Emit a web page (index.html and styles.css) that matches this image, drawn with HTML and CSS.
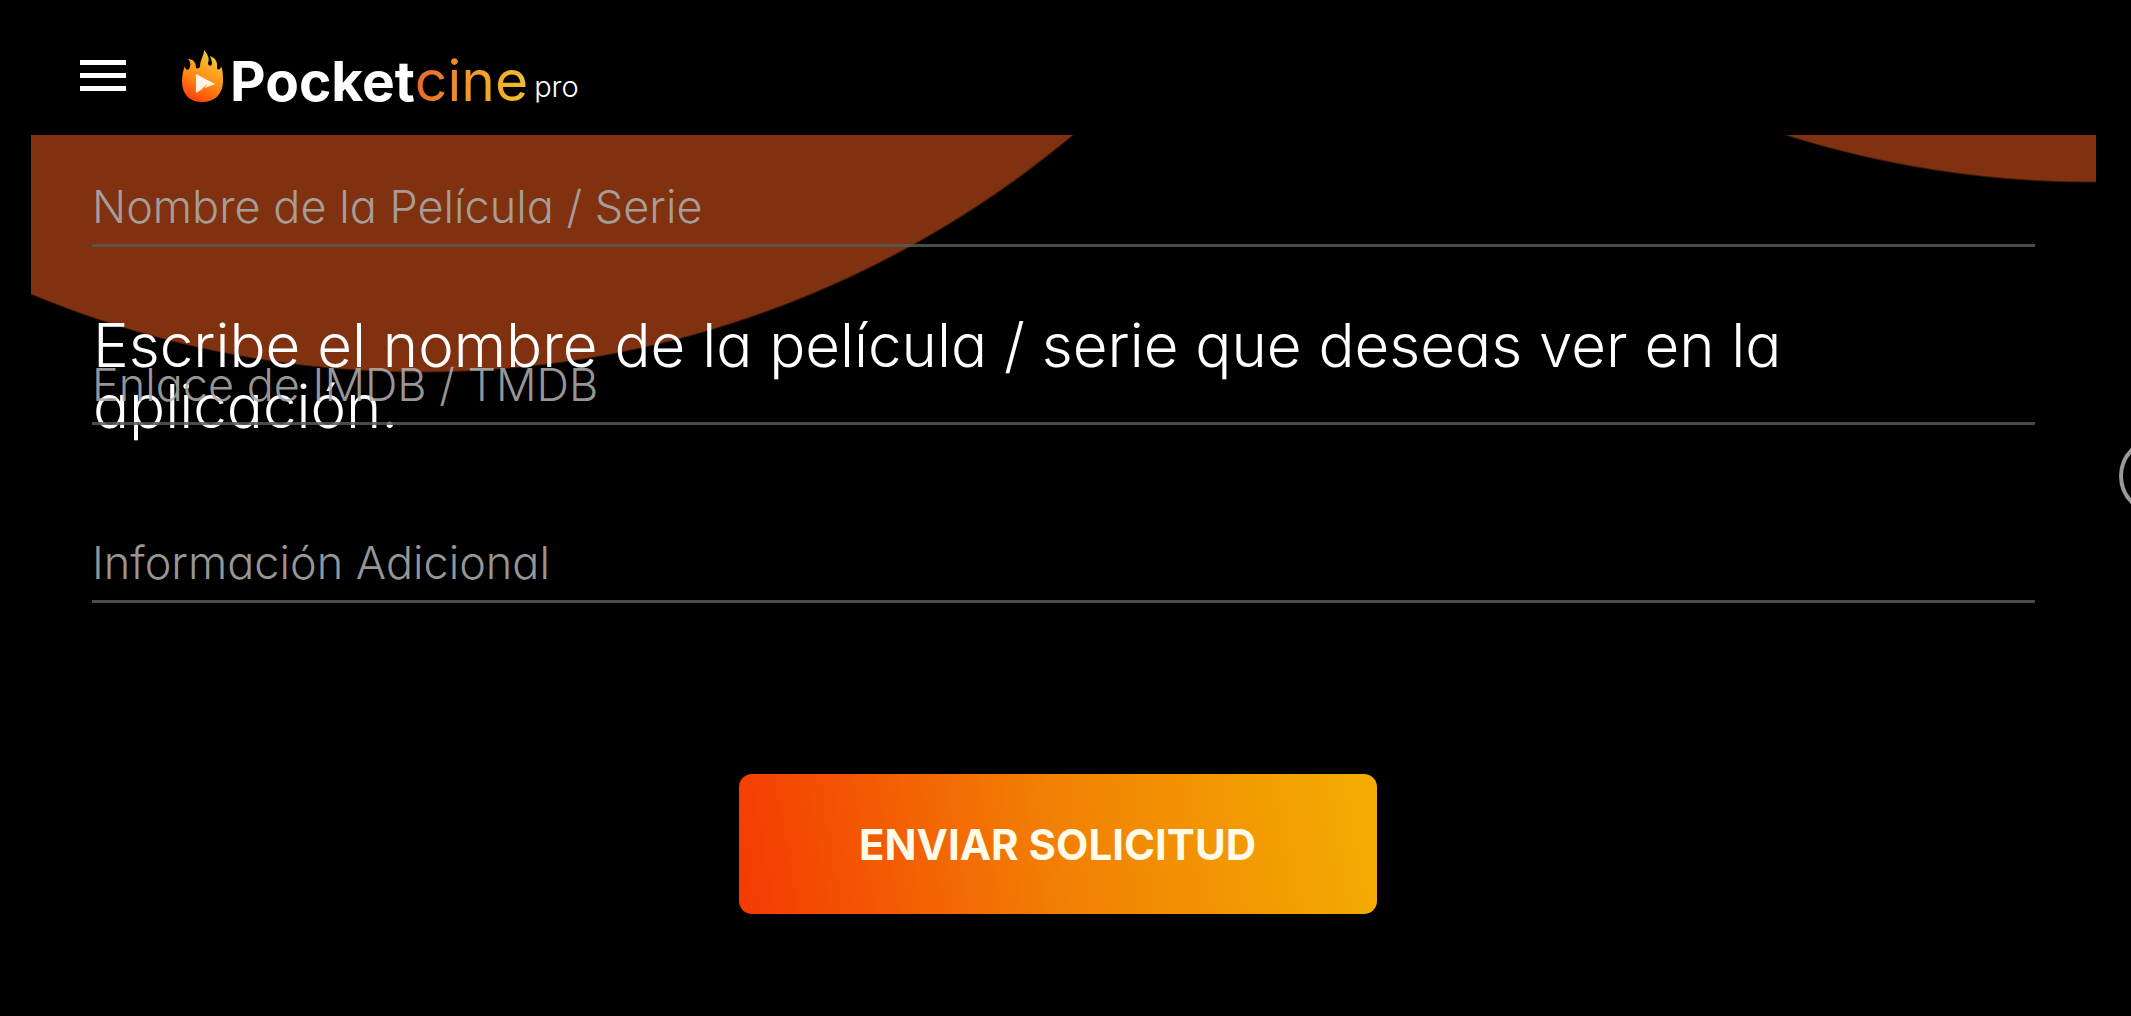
FILE: index.html
```html
<!DOCTYPE html>
<html lang="es">
<head>
<meta charset="utf-8">
<meta name="viewport" content="width=device-width, initial-scale=1">
<title>Pocketcine pro</title>
<link rel="stylesheet" href="styles.css">
</head>
<body>
<header class="topbar">
  <button class="menu" type="button" aria-label="Menú">
    <svg viewBox="0 0 46 32" width="46" height="32" aria-hidden="true">
      <path fill="#fff" d="M0 0h46v5H0zM0 13h46v5H0zM0 26h46v5H0z"/>
    </svg>
  </button>
  <a class="brand" href="#">
    <svg class="flame" viewBox="0 0 42 52" width="42" height="52" aria-hidden="true">
      <defs>
        <linearGradient id="fire" x1="0.25" y1="1" x2="0.65" y2="0">
          <stop offset="0" stop-color="#ff3c0c"/>
          <stop offset="0.45" stop-color="#ff8a14"/>
          <stop offset="1" stop-color="#f0d038"/>
        </linearGradient>
      </defs>
      <path fill="url(#fire)" d="M0 31C0 26 1 20 3 16C3 19 5 21 7 19C9 16 9 12 6 9C12 9 14 13 14 18C16 19 18 18 18 16C18 10 22 6 22 0C26 5 28 9 26 13C26 16 29 17 30 14C30 11 29 9 28 6C34 8 36 13 35 18C36 21 39 19 39 16C41 20 41 26 41 31C41 44 33 52 20 52S0 44 0 31Z"/>
      <path fill="#fff3e6" d="M14 24L33 34L23 38L25 34L19 40L14 43Z"/>
    </svg>
    <span class="wordmark"><span class="pocket">Pocket</span><span class="cine">cine</span><span class="pro">pro</span></span>
  </a>
</header>
<main class="panel">
  <form class="request">
    <div class="field">
      <div class="control">
        <label for="titulo">Nombre de la Película / Serie</label>
        <input id="titulo" type="text" aria-describedby="ayuda">
      </div>
      <p class="help" id="ayuda">Escribe el nombre de la película / serie que deseas ver en la aplicación.</p>
    </div>
    <div class="field">
      <div class="control">
        <label for="enlace">Enlace de IMDB / TMDB</label>
        <input id="enlace" type="text">
      </div>
    </div>
    <div class="field">
      <div class="control">
        <label for="info">Información Adicional</label>
        <input id="info" type="text">
      </div>
    </div>
    <div class="actions">
      <button class="submit" type="submit">ENVIAR SOLICITUD</button>
    </div>
  </form>
</main>
<div class="edge" aria-hidden="true"></div>
</body>
</html>
```
FILE: styles.css
```css
* {
  box-sizing: border-box;
}

body {
  position: relative;
  min-height: 100vh;
  margin: 0;
  overflow-x: hidden;
  background: #000;
  color: #fff;
  font-family: Inter, "Open Sans", sans-serif;
  font-weight: 300;
  font-feature-settings: "cv11";
}

.topbar {
  display: flex;
  align-items: center;
  gap: 56px;
  height: 135px;
  padding: 16px 80px 0;
}

.menu {
  display: flex;
  padding: 0;
  border: 0;
  background: none;
}

.brand {
  display: flex;
  align-items: center;
  color: #fff;
  text-decoration: none;
}

.flame {
  margin-right: 6px;
}

.wordmark {
  padding-top: 16px;
  font-size: 55px;
  line-height: 64px;
}

.pocket {
  font-weight: 700;
}

.cine {
  background: linear-gradient(90deg, #e8672c, #f09a28 50%, #f0c030);
  background-clip: text;
  color: transparent;
  font-size: 57px;
  font-weight: 400;
}

.pro {
  margin-left: 6px;
  font-size: 29px;
  vertical-align: 4px;
}

.panel {
  margin: 0 35px 0 31px;
  background:
    radial-gradient(circle at 390px -778px, #803210 1014px, transparent 1016px),
    radial-gradient(circle at calc(100% - 5px) -968px, #803210 1014px, transparent 1016px);
}

.request {
  padding: 16px 61px 100px;
}

.field {
  height: 178px;
}

.control {
  display: grid;
  position: relative;
  height: 96px;
  border-bottom: 3px solid rgba(88, 88, 88, 0.85);
}

.control label,
.control input {
  grid-area: 1 / 1;
}

.control label {
  align-self: center;
  padding-top: 18px;
  color: rgba(172, 172, 172, 0.88);
  font-size: 45px;
  line-height: 56px;
}

.control input {
  min-width: 0;
  padding: 18px 0 0;
  border: 0;
  outline: 0;
  background: none;
  color: #fff;
  font: inherit;
  font-size: 45px;
}

.help {
  margin: 68px 0 0;
  padding: 0 1px;
  font-size: 60px;
  line-height: 61px;
}

.actions {
  display: flex;
  justify-content: center;
  padding: 89px 12px 0 0;
}

.submit {
  width: 638px;
  height: 140px;
  border: 0;
  border-radius: 13px;
  background: linear-gradient(80deg, #f43a02, #f28004 50%, #f3ae02);
  color: #fffbe8;
  font: inherit;
  font-size: 42px;
  font-weight: 700;
}

.edge {
  position: absolute;
  top: 437px;
  right: -66px;
  width: 78px;
  height: 78px;
  border: 4px solid #9a9a9a;
  border-radius: 50%;
}
```
